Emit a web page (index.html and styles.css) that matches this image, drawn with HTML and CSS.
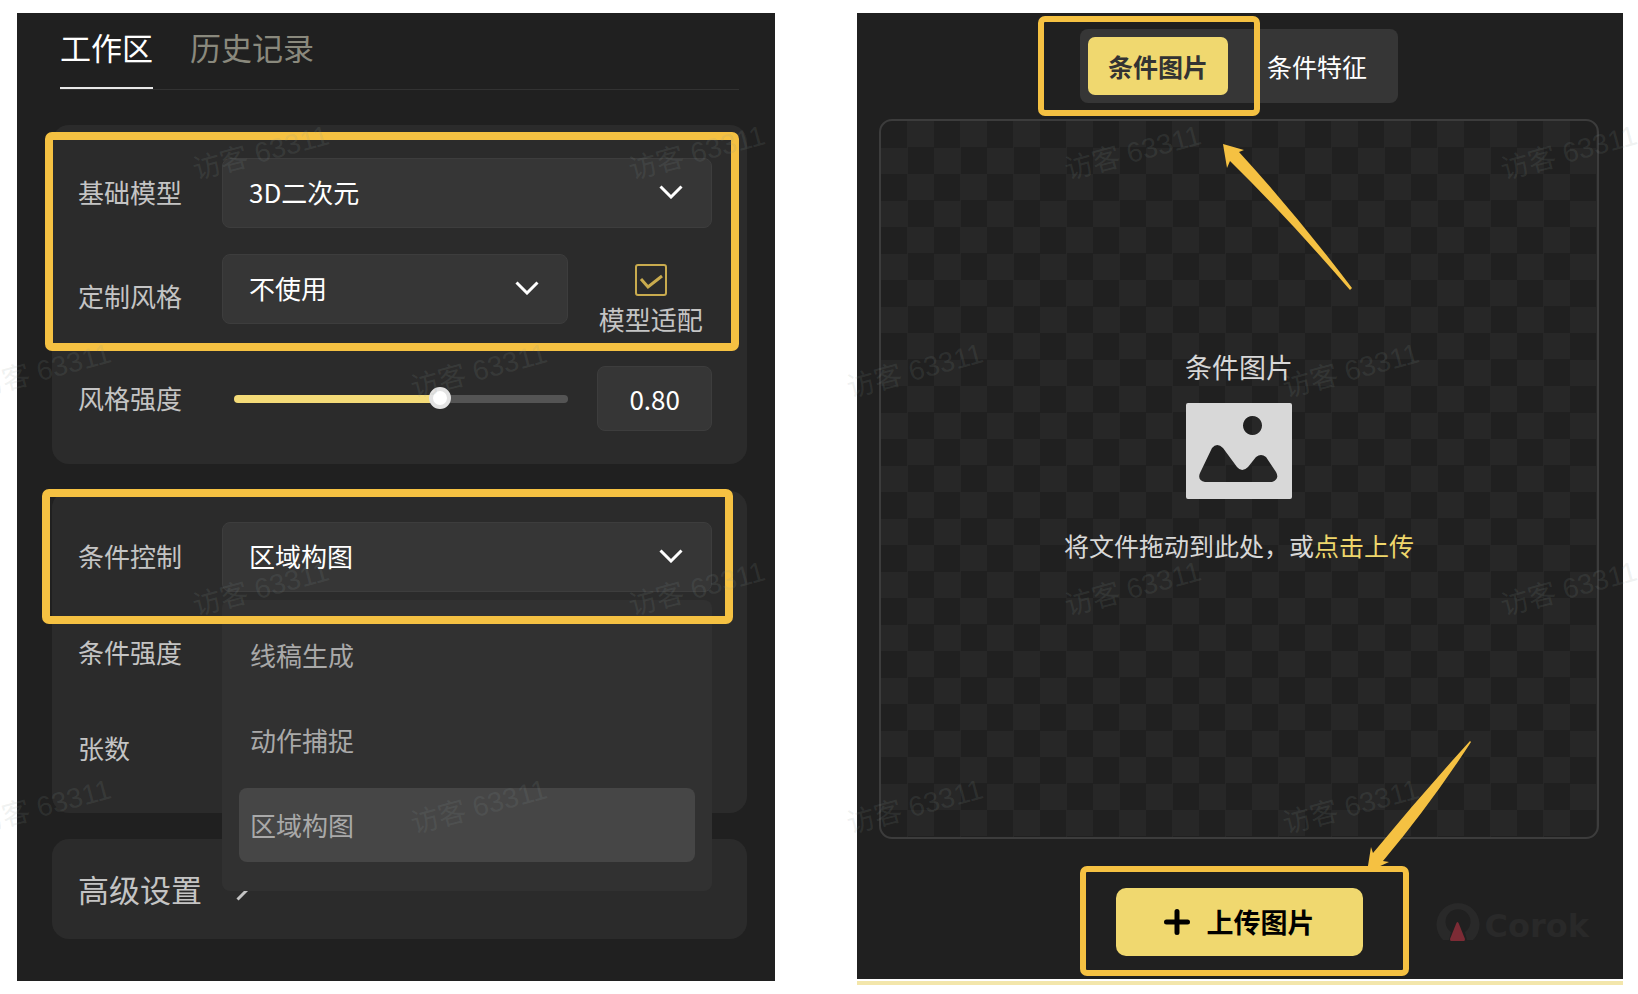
FILE: index.html
```
<!DOCTYPE html>
<html lang="zh-CN">
<head>
    <meta charset="UTF-8">
    <meta name="viewport" content="width=device-width, initial-scale=1.0">
    <title>工作区</title>
    <link rel="stylesheet" href="styles.css">
</head>
<body>
    <main class="page">
        <!-- Settings panel -->
        <section class="panel settings">
            <nav class="tabs">
                <button class="tab active">工作区</button>
                <button class="tab">历史记录</button>
            </nav>

            <div class="card">
                <div class="row">
                    <label for="base-model">基础模型</label>
                    <div class="select-box">
                        <select id="base-model"><option>3D二次元</option></select>
                        <svg class="chevron" viewBox="0 0 24 14"><path d="M1.5 1.5 12 12 22.5 1.5"/></svg>
                    </div>
                </div>
                <div class="row style-row">
                    <label for="custom-style">定制风格</label>
                    <div class="select-box">
                        <select id="custom-style"><option>不使用</option></select>
                        <svg class="chevron" viewBox="0 0 24 14"><path d="M1.5 1.5 12 12 22.5 1.5"/></svg>
                    </div>
                    <div class="side check">
                        <input type="checkbox" id="adapt" checked>
                        <label for="adapt">模型适配</label>
                    </div>
                </div>
                <div class="row">
                    <label for="strength">风格强度</label>
                    <div class="slider-box">
                        <input type="range" id="strength" min="0" max="1.28" step="0.01" value="0.8">
                    </div>
                    <input class="side number" type="text" value="0.80" aria-label="风格强度数值">
                </div>
                <div class="mark mark-model"></div>
            </div>

            <div class="card control-card">
                <div class="row">
                    <label for="control">条件控制</label>
                    <div class="select-box">
                        <select id="control"><option>区域构图</option></select>
                        <svg class="chevron" viewBox="0 0 24 14"><path d="M1.5 1.5 12 12 22.5 1.5"/></svg>
                        <div class="dropdown" role="listbox" aria-label="条件控制">
                            <button role="option" aria-selected="false">线稿生成</button>
                            <button role="option" aria-selected="false">动作捕捉</button>
                            <button role="option" aria-selected="true" class="selected">区域构图</button>
                        </div>
                    </div>
                </div>
                <div class="row"><span class="label">条件强度</span></div>
                <div class="row"><span class="label">张数</span></div>
                <div class="mark mark-control"></div>
            </div>

            <button class="card advanced">
                高级设置
                <svg viewBox="0 0 14 24"><path d="M1.5 1.5 12 12 1.5 22.5"/></svg>
            </button>
        </section>

        <!-- Upload panel -->
        <section class="upload-side">
            <div class="panel upload">
                <div class="switch">
                    <button class="active">条件图片</button>
                    <button>条件特征</button>
                    <div class="mark mark-switch"></div>
                </div>

                <div class="drop-area">
                    <h2>条件图片</h2>
                    <svg class="picture" viewBox="0 0 106 96">
                        <path fill-rule="evenodd" d="M2 0H104Q106 0 106 2V94Q106 96 104 96H2Q0 96 0 94V2Q0 0 2 0ZM66.500 13a9.500 9.500 0 1 0 .01 0ZM26 45Q31 39 37 45L51 64Q56 70 62 64L70 54Q75 50 80 54L90 69Q94 76 86 79H19Q11 77 14 70Z"/>
                    </svg>
                    <p>将文件拖动到此处，或<a href="#">点击上传</a></p>
                    <svg class="arrow arrow-top" viewBox="0 0 130 147">
                        <path d="M0 0 21 6 16 8Q72 69 129 144L127 146Q65 74 7 17L4 24Z"/>
                    </svg>
                </div>

                <div class="footer">
                    <div class="upload-box">
                        <button class="upload-button">
                            <svg viewBox="0 0 26 26"><path d="M13 2.500V23.500M2.500 13H23.500"/></svg>
                            上传图片
                        </button>
                        <div class="mark mark-upload"></div>
                        <svg class="arrow arrow-bottom" viewBox="0 0 106 132">
                            <path d="M104 1 105 2Q64 65 17 121L23 122 1 132 5 107 7 113Q54 56 104 1Z"/>
                        </svg>
                    </div>
                    <div class="logo">
                        <svg viewBox="0 0 44 40">
                            <path class="ring" d="M7 38H13L15 30A12.500 12.500 0 1 1 29 30L31 38H37A21.500 21.500 0 1 0 7 38Z"/>
                            <path class="cone" d="M20 22Q21.500 18 23 22L29 37Q29 39 28 39H15Q14 39 14 37Z"/>
                        </svg>
                        <span>Corok</span>
                    </div>
                </div>
            </div>
            <div class="strip"></div>
        </section>
    </main>

    <!-- Visitor watermark -->
    <div class="watermark" aria-hidden="true">
        <div class="line"><span>访客 63311</span><span>访客 63311</span><span>访客 63311</span><span>访客 63311</span></div>
        <div class="line shifted"><span>访客 63311</span><span>访客 63311</span><span>访客 63311</span><span>访客 63311</span></div>
        <div class="line"><span>访客 63311</span><span>访客 63311</span><span>访客 63311</span><span>访客 63311</span></div>
        <div class="line shifted"><span>访客 63311</span><span>访客 63311</span><span>访客 63311</span><span>访客 63311</span></div>
    </div>
</body>
</html>
```

FILE: styles.css
```
* {
    box-sizing: border-box;
}

body {
    position: relative;
    margin: 0;
    min-height: 100vh;
    background-color: #fff;
    font-family: "Noto Sans CJK SC", sans-serif;
    font-size: 26px;
    line-height: 32px;
    color: #c4c4c4;
}

button, input, select {
    font: inherit;
    color: inherit;
    margin: 0;
}

button {
    padding: 0;
    border: none;
    background: none;
    cursor: pointer;
}

.page {
    display: grid;
    grid-template-columns: 99fr 100fr;
    gap: 82px;
    align-items: start;
    padding: 13px 15px 0 17px;
}

.panel {
    background-color: #202020;
}

.settings {
    padding: 0 28px 42px 35px;
}

/* Tabs */
.tabs {
    display: flex;
    gap: 37px;
    margin: 0 8px 35px;
    border-bottom: 1px solid #323232;
}

.tab {
    height: 76px;
    padding-bottom: 8px;
    font-size: 31px;
    color: #8a897d;
}

.tab.active {
    padding-bottom: 6px;
    color: #fff;
    border-bottom: 2px solid #e8e8e8;
}

/* Cards */
.card {
    position: relative;
    display: flex;
    flex-direction: column;
    gap: 26px;
    padding: 33px 35px 33px 26px;
    margin-bottom: 27px;
    border-radius: 17px;
    background-color: #2b2b2b;
}

.control-card {
    padding-top: 31px;
    padding-bottom: 29px;
    margin-bottom: 26px;
}

.row {
    display: flex;
    align-items: center;
}

.row > label,
.label {
    flex: none;
    width: 144px;
    padding-bottom: 2px;
}

.control-card .row {
    min-height: 70px;
}

.select-box {
    position: relative;
    flex: 1;
}

.select-box select {
    display: block;
    width: 100%;
    height: 70px;
    padding: 0 60px 3px 26px;
    border: 1px solid #3d3d3d;
    border-radius: 8px;
    background-color: #363636;
    color: #fff;
    appearance: none;
}

.chevron {
    position: absolute;
    top: 27px;
    right: 29px;
    width: 24px;
    height: 14px;
    fill: none;
    stroke: #fff;
    stroke-width: 3;
    pointer-events: none;
}

.side {
    flex: none;
    width: 115px;
    margin-left: 29px;
}

.style-row .select-box {
    align-self: flex-start;
}

.check {
    display: flex;
    flex-direction: column;
    align-items: center;
    gap: 7px;
    padding: 10px 8px 5px 0;
}

.check label {
    white-space: nowrap;
}

.check input {
    width: 32px;
    height: 32px;
    border: 2px solid #c9ab4e;
    border-radius: 3px;
    background: url('data:image/svg+xml,<svg xmlns="http://www.w3.org/2000/svg" viewBox="0 0 28 28"><path d="M4 13 11 21 25 10" fill="none" stroke="%23c9ab4e" stroke-width="3"/></svg>') center / 28px 28px no-repeat;
    appearance: none;
}

.slider-box {
    flex: 1;
    display: flex;
    padding-left: 12px;
}

.slider-box input {
    width: 100%;
    height: 22px;
    background: none;
    appearance: none;
}

.slider-box input::-webkit-slider-runnable-track {
    height: 8px;
    border-radius: 4px;
    background: linear-gradient(to right, #f4db78 62%, #545454 62%);
}

.slider-box input::-webkit-slider-thumb {
    width: 22px;
    height: 22px;
    margin-top: -8px;
    border: 4px solid #e3e3e3;
    border-radius: 50%;
    background-color: #fff;
    appearance: none;
}

.number {
    height: 65px;
    padding: 0;
    border: 1px solid #3d3d3d;
    border-radius: 8px;
    background-color: #363636;
    color: #fff;
    text-align: center;
}

/* Open list of the control select */
.dropdown {
    position: absolute;
    top: 78px;
    left: 0;
    right: 0;
    z-index: 2;
    display: flex;
    flex-direction: column;
    gap: 11px;
    padding: 18px 17px 29px;
    border-radius: 8px;
    background-color: #313131;
    color: #a9a9a9;
}

.dropdown button {
    height: 74px;
    padding: 0 11px;
    border-radius: 8px;
    text-align: left;
}

.dropdown .selected {
    background-color: #464646;
}

.advanced {
    flex-direction: row;
    align-items: center;
    gap: 34px;
    width: 100%;
    min-height: 100px;
    margin-bottom: 0;
    font-size: 31px;
}

.advanced svg {
    width: 14px;
    height: 24px;
    fill: none;
    stroke: #c4c4c4;
    stroke-width: 3;
}

/* Upload panel */
.upload {
    display: flex;
    flex-direction: column;
    align-items: center;
    padding: 16px 24px 23px 22px;
}

.strip {
    height: 4px;
    margin-top: 2px;
    background-color: #f3e6ab;
}

.switch {
    position: relative;
    display: flex;
    padding: 8px;
    border-radius: 8px;
    background-color: #363636;
    font-size: 25px;
}

.switch button {
    height: 58px;
    padding: 0 23px 0 39px;
    border-radius: 7px;
    color: #fff;
}

.switch .active {
    padding: 0 20px;
    background-color: #f0d86f;
    color: #333;
    font-weight: bold;
}

.drop-area {
    position: relative;
    display: flex;
    flex-direction: column;
    align-items: center;
    justify-content: center;
    width: 100%;
    aspect-ratio: 1;
    margin-top: 16px;
    padding-bottom: 46px;
    border: 2px solid #3c3c3c;
    border-radius: 13px;
    background: conic-gradient(#272727 25%, #202020 0 50%, #272727 0 75%, #202020 0) 0 0 / 53px 53px;
    color: #d8d8d8;
}

.drop-area h2 {
    margin: 0 0 20px;
    font-size: 27px;
    font-weight: normal;
}

.drop-area p {
    margin: 30px 0 0;
    font-size: 25px;
}

.drop-area a {
    color: #efd76c;
    text-decoration: none;
}

.picture {
    width: 106px;
    height: 96px;
    fill: #d8d8d8;
}

.footer {
    display: grid;
    grid-template-columns: 1fr auto 1fr;
    align-items: center;
    width: 100%;
    margin-top: 49px;
}

.upload-box {
    position: relative;
    grid-column: 2;
}

.upload-button {
    display: flex;
    align-items: center;
    gap: 17px;
    height: 68px;
    padding: 0 48px;
    border-radius: 10px;
    background-color: #f0d86f;
    color: #000;
    font-size: 27px;
    font-weight: bold;
}

.upload-button svg {
    width: 26px;
    height: 26px;
    stroke: #000;
    stroke-width: 5;
    stroke-linecap: round;
}

.logo {
    display: flex;
    align-items: center;
    justify-self: end;
    gap: 4px;
    margin-right: 10px;
    color: #292929;
    font-family: "DejaVu Sans", sans-serif;
    font-size: 32px;
    font-weight: bold;
}

.logo span {
    padding-top: 8px;
}

.logo svg {
    width: 44px;
    height: 40px;
}

.ring {
    fill: #292929;
}

.cone {
    fill: #7c2b35;
}

/* Guide frames and arrows */
.mark {
    position: absolute;
    z-index: 3;
    border: 8px solid #f5c142;
    border-radius: 7px;
    pointer-events: none;
}

.mark-model {
    top: 7px;
    left: -7px;
    right: 8px;
    height: 219px;
}

.mark-control {
    top: -2px;
    left: -10px;
    right: 14px;
    height: 135px;
}

.mark-switch {
    top: -13px;
    left: -42px;
    width: 222px;
    height: 100px;
    border-width: 6px;
}

.mark-upload {
    top: -22px;
    bottom: -20px;
    left: -36px;
    right: -46px;
    border-width: 6px;
}

.arrow {
    position: absolute;
    z-index: 3;
    fill: #f5c142;
    pointer-events: none;
}

.arrow-top {
    top: 23px;
    left: 342px;
    width: 130px;
    height: 147px;
}

.arrow-bottom {
    top: -148px;
    left: 250px;
    width: 106px;
    height: 132px;
}

/* Watermark */
.watermark {
    position: absolute;
    inset: 0;
    z-index: 5;
    overflow: hidden;
    padding-top: 44px;
    pointer-events: none;
    font-family: "Liberation Sans", "Noto Sans CJK SC", sans-serif;
    font-size: 28px;
    color: rgba(140, 155, 150, 0.14);
}

.line {
    display: flex;
    margin-left: 43px;
}

.line.shifted {
    margin-left: -175px;
}

.line span {
    flex: none;
    width: 436px;
    line-height: 218px;
    text-align: center;
    transform: rotate(-15deg);
}
```
